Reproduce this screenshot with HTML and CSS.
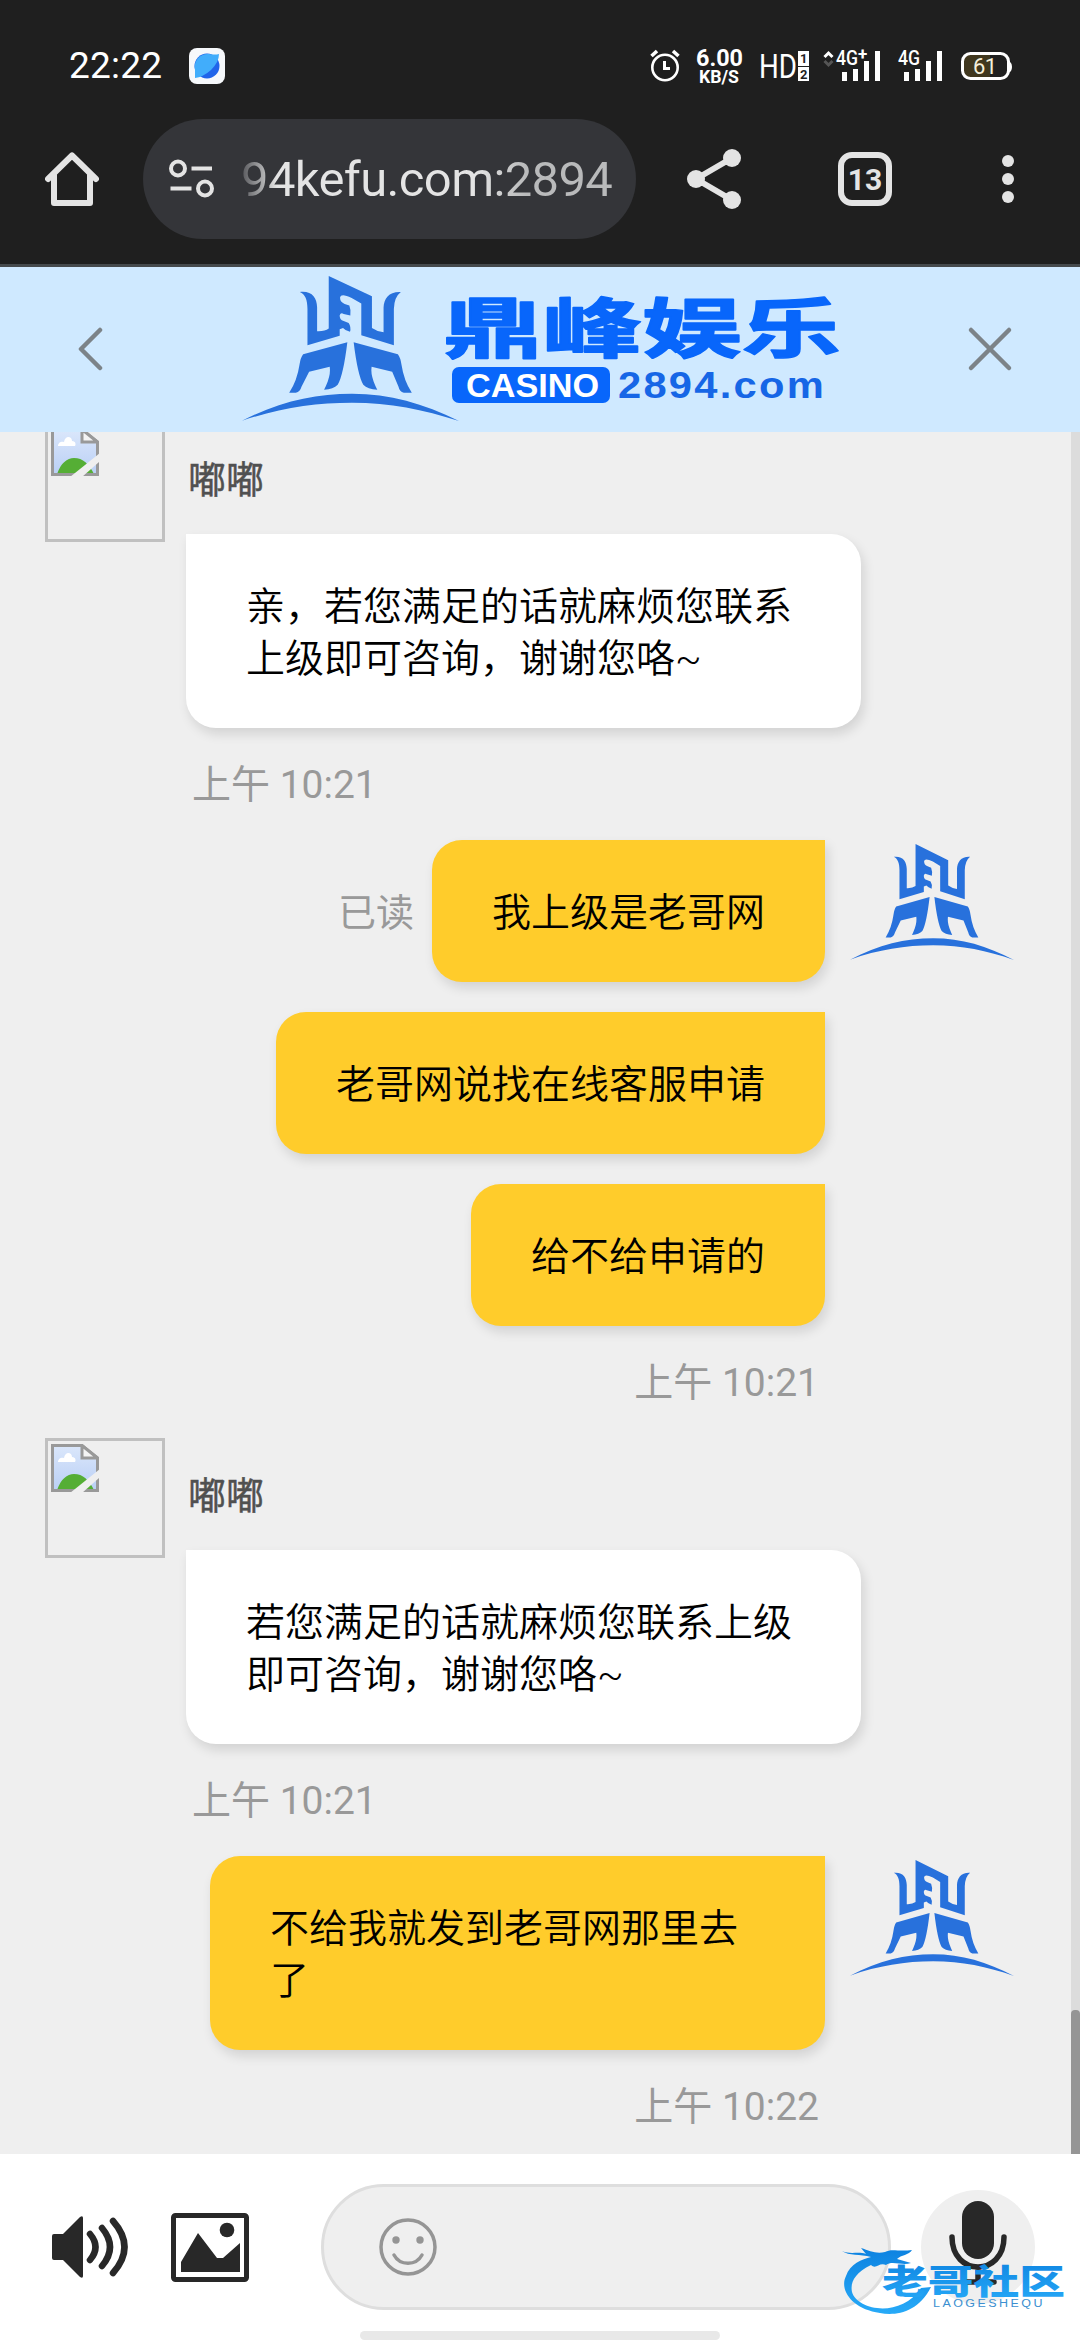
FILE: index.html
```html
<!DOCTYPE html>
<html lang="zh-CN">
<head>
<meta charset="utf-8">
<title>鼎峰娱乐 客服</title>
<link rel="stylesheet" href="styles.css">
</head>
<body>
<svg class="defs" aria-hidden="true">
  <defs>
    <linearGradient id="sky" x1="0" y1="0" x2="0" y2="1"><stop offset="0" stop-color="#dbe7fb"/><stop offset="1" stop-color="#b9cff5"/></linearGradient>
    <linearGradient id="wm" x1="0" y1="0" x2="0" y2="1"><stop offset="0" stop-color="#0d82e0"/><stop offset="1" stop-color="#27aaf8"/></linearGradient>
    <symbol id="emblem" viewBox="65 33 653 436" preserveAspectRatio="none">
      <path d="M326 33L456 94V189Q472 200 491 202V128C492 100 508 79 543 81Q523 96 522 132V241L424 211V116L395 99Q362 84 360 98Q360 112 374 117L388 122Q394 137 391 152L371 147Q362 141 359 151Q358 165 371 168L386 174Q394 186 390 201Q376 197 369 189L359 193V213L262 241V132C262 104 255 88 239 81C276 77 290 98 291 127V199Q314 200 326 191Z"/>
      <path d="M382 232L249 268Q241 278 238 300Q231 348 207 384H227Q240 381 244 366L267 321L329 306Q332 325 323 350Q318 363 312 375Q340 373 353 360Q370 331 382 232Z"/>
      <path d="M401 232L534 268Q542 278 545 300Q552 348 576 384H552Q539 381 536 366L517 321L455 306Q452 325 461 350Q466 363 472 375Q443 373 430 360Q413 331 401 232Z"/>
      <path d="M65 468C180 410 285 387 396 387C510 387 610 416 718 469C610 434 510 414 396 414C285 414 180 430 65 468Z"/>
    </symbol>
    <symbol id="broken" viewBox="0 0 48 48">
      <path d="M1.5 1.5H31L46.500 14V46.500H1.500Z" fill="url(#sky)"/>
      <path d="M6 46C10 35 16 30 23 30C32 30 38 36 43 46Z" fill="#55ae35"/>
      <path d="M7 18C7 14 11 13 13 14C14 7 21 8 21 13C25 13 25 17 24 18Z" fill="#fff"/>
      <path d="M1.500 1.500H31L46.500 14V46.500H1.500Z" fill="none" stroke="#999" stroke-width="3"/>
      <path d="M31 1.500V14H46.500Z" fill="#f4f4f4" stroke="#999" stroke-width="3"/>
      <path d="M49 25V33L31 49H19Z" fill="#efefef"/>
    </symbol>
  </defs>
</svg>
<div class="screen">
  <div class="status">
    <span class="clock">22:22</span>
    <svg class="app" width="36" height="36" viewBox="0 0 36 36"><rect width="36" height="36" rx="8" fill="#f6f8fb"/><circle cx="18" cy="18" r="12.500" fill="#2064ea"/><path d="M30 6Q30 14 22 22Q14 29 6 30Q6 26 6 22C4 12 12 5 20 6Q26 7 30 6Z" fill="#41adfb"/></svg>
    <svg class="indicators" width="370" height="46" viewBox="0 0 370 46">
      <g fill="none" stroke="#fff" stroke-width="2.600">
        <circle cx="15" cy="22.500" r="12.700"/><path d="M14.500 16V23.500H20" stroke-width="3"/><path d="M1.500 11L7 6M28.500 11L23 6" stroke-width="3.600"/>
      </g>
      <g fill="#fff" class="num">
        <text x="46" y="20.500" font-size="24" font-weight="700" textLength="47" lengthAdjust="spacingAndGlyphs">6.00</text>
        <text x="49" y="38" font-size="18" font-weight="700" textLength="40" lengthAdjust="spacingAndGlyphs">KB/S</text>
        <text x="109" y="33" font-size="33" textLength="38" lengthAdjust="spacingAndGlyphs">HD</text>
        <path d="M148 6H159V21H148ZM148 22H159V36H148Z"/>
        <text x="186" y="20" font-size="21" font-weight="500" textLength="22" lengthAdjust="spacingAndGlyphs">4G</text>
        <text x="208" y="15" font-size="17" font-weight="700">+</text>
        <text x="248" y="20" font-size="21" font-weight="500" textLength="22" lengthAdjust="spacingAndGlyphs">4G</text>
        <path d="M192 27h5v9h-5zM203 24h5v12h-5zM214 16h5v20h-5zM225 6h5v30h-5zM254 27h5v9h-5zM265 24h5v12h-5zM276 16h5v20h-5zM287 6h5v30h-5z"/>
        <path d="M358 16q4 1 4 6t-4 6z"/>
      </g>
      <g class="num" fill="#1f1f1f" font-weight="700" font-size="13"><text x="150" y="18">1</text><text x="150" y="34">2</text></g>
      <path d="M174.500 12L178.500 8L182.500 12" fill="none" stroke="#fff" stroke-width="3"/>
      <path d="M174.500 16L178.500 20L182.500 16" fill="none" stroke="#555" stroke-width="3"/>
      <path d="M319 9H340V34H319Q314 34 314 28V15Q314 9 319 9" fill="#40371e"/>
      <rect x="312.500" y="8.500" width="46" height="25" rx="8" fill="none" stroke="#fff" stroke-width="3"/>
      <text class="num" x="323" y="28.500" font-size="22" fill="#f5f0dc" textLength="24">61</text>
    </svg>
  </div>

  <div class="browser">
    <svg class="home" width="54" height="54" viewBox="0 0 54 54" fill="none" stroke="#e4e4e4" stroke-width="6" stroke-linejoin="round" stroke-linecap="round"><path d="M3 27L27 3.500L51 27"/><path d="M9 23V51H45V23"/></svg>
    <div class="url">
      <svg width="46" height="40" viewBox="0 0 46 40" fill="none" stroke="#e4e4e4" stroke-width="4"><circle cx="9" cy="9.500" r="7"/><path d="M22.500 9.500H43M1.500 29.500H22.500"/><circle cx="36" cy="29.500" r="7"/></svg>
      <span class="address">94kefu.com:2894</span>
    </div>
    <svg class="share" width="54" height="60" viewBox="0 0 54 60" fill="#e4e4e4"><path d="M9 30L45 9M9 30L45 51" stroke="#e4e4e4" stroke-width="6"/><circle cx="9" cy="30" r="9"/><circle cx="45" cy="9" r="9"/><circle cx="45" cy="51" r="9"/></svg>
    <span class="tabs">13</span>
    <svg class="more" width="12" height="48" viewBox="0 0 12 48" fill="#e4e4e4"><circle cx="6" cy="6" r="6"/><circle cx="6" cy="24" r="6"/><circle cx="6" cy="42" r="6"/></svg>
  </div>

  <header class="header">
    <svg class="back" width="26" height="44" viewBox="0 0 26 44"><path d="M22 3L3 22L22 41"/></svg>
    <svg class="brand" width="600" height="165" viewBox="0 0 600 165">
      <use href="#emblem" x="2" y="9" width="217" height="145" fill="#2871dc"/>
      <text class="brand-cn" x="203" y="85" textLength="398" lengthAdjust="spacingAndGlyphs">鼎峰娱乐</text>
      <rect x="212" y="100" width="158" height="36" rx="7" fill="#0866fb"/>
      <text class="brand-en" x="226" y="130" font-size="34" fill="#fff" textLength="133" lengthAdjust="spacingAndGlyphs">CASINO</text>
      <text class="brand-en dom" x="378" y="130.500" font-size="37" fill="#1666e6" textLength="208" lengthAdjust="spacingAndGlyphs">2894.com</text>
    </svg>
    <svg class="close" width="46" height="46" viewBox="0 0 46 46"><path d="M4 4L42 42M42 4L4 42"/></svg>
  </header>

  <main class="chat">
    <div class="log">
      <section class="turn agent">
        <div class="frame"><svg width="48" height="48"><use href="#broken"/></svg></div>
        <div class="column">
          <div class="name">嘟嘟</div>
          <div class="bubble">亲，若您满足的话就麻烦您联系<br>上级即可咨询，谢谢您咯~</div>
          <div class="time">上午 10:21</div>
        </div>
      </section>
      <section class="turn user">
        <div class="column">
          <div class="line"><span class="read">已读</span><div class="bubble">我上级是老哥网</div></div>
          <div class="bubble">老哥网说找在线客服申请</div>
          <div class="bubble">给不给申请的</div>
          <div class="time">上午 10:21</div>
        </div>
        <svg class="avatar" width="164" height="116"><use href="#emblem" width="164" height="116"/></svg>
      </section>
      <section class="turn agent">
        <div class="frame"><svg width="48" height="48"><use href="#broken"/></svg></div>
        <div class="column">
          <div class="name">嘟嘟</div>
          <div class="bubble">若您满足的话就麻烦您联系上级<br>即可咨询，谢谢您咯~</div>
          <div class="time">上午 10:21</div>
        </div>
      </section>
      <section class="turn user">
        <div class="column">
          <div class="bubble wide">不给我就发到老哥网那里去<br>了</div>
          <div class="time">上午 10:22</div>
        </div>
        <svg class="avatar" width="164" height="116"><use href="#emblem" width="164" height="116"/></svg>
      </section>
    </div>
    <div class="track"><div class="thumb"></div></div>
  </main>

  <footer class="composer">
    <svg class="sound" width="76" height="64" viewBox="0 0 76 64"><path d="M2 19H11L28 2Q31 0 31 3V61Q31 64 28 62L11 45H2Q0 45 0 43V21Q0 19 2 19Z" fill="#282828"/><path d="M38 19Q49 32 38 45M50 13Q66 32 50 51M61 6Q84 32 61 58" fill="none" stroke="#282828" stroke-width="6.500" stroke-linecap="round"/></svg>
    <svg class="picture" width="78" height="69" viewBox="0 0 78 69"><rect x="2.500" y="2.500" width="73" height="64" rx="2" fill="none" stroke="#282828" stroke-width="5"/><path d="M10 59V49L27 20L46 45H52L69 30V59Z" fill="#282828"/><circle cx="56" cy="17" r="7.300" fill="#282828"/></svg>
    <div class="input"><svg width="58" height="58" viewBox="0 0 58 58" fill="none" stroke="#959595" stroke-width="3.500"><circle cx="29" cy="29" r="27"/><path d="M15 37C21 48 37 48 43 37" stroke-linecap="round"/><g fill="#959595" stroke="none"><circle cx="17" cy="22" r="3.700"/><circle cx="41" cy="22" r="3.700"/></g></svg></div>
    <div class="mic"><svg width="114" height="114" viewBox="0 0 114 114"><rect x="41" y="11" width="32" height="58" rx="16" fill="#282828"/><path d="M31 47C31 87 83 87 83 47M57 78V92M43 92H73" fill="none" stroke="#282828" stroke-width="5.500" stroke-linecap="round"/></svg></div>
    <svg class="watermark" width="228" height="80" viewBox="0 0 228 80">
      <path d="M0 6C9 10 16 6 24 9L19 3C28 6 34 9 43 7C50 3 56 7 70 5C67 10 59 10 55 14L69 18C60 21 50 15 44 20C37 17 34 25 29 20C13 28 8 37 10 47C15 65 58 74 79 43L89 42C76 68 53 71 38 68C10 64-3 45 4 31C8 19 20 14 29 12C18 9 7 11 0 6Z" fill="url(#wm)"/>
      <text class="wm-cn" x="40" y="49" fill="url(#wm)" textLength="183" lengthAdjust="spacingAndGlyphs">老哥社区</text>
      <text class="wm-en" x="91" y="62" textLength="112" lengthAdjust="spacingAndGlyphs">LAOGESHEQU</text>
    </svg>
    <div class="handle"></div>
  </footer>
</div>
</body>
</html>
```

FILE: styles.css
```css
* { box-sizing: border-box; }
body { margin: 0; font-family: Roboto, "Noto Sans CJK SC", sans-serif; }
svg { display: block; flex: none; }
.defs { position: absolute; width: 0; height: 0; }
.screen { width: 1080px; height: 2340px; display: flex; flex-direction: column; overflow: hidden; background: #efefef; }

.status { height: 120px; flex: none; padding: 44px 0 0 69px; display: flex; align-items: flex-start; background: #1f1f1f; color: #fff; }
.clock { width: 93px; margin-right: 27px; font-size: 37px; line-height: 44px; letter-spacing: 0.200px; white-space: nowrap; }
.app { margin-top: 4px; }
.indicators { margin: 1px 0 0 425px; }
.num { font-family: Roboto, sans-serif; }

.browser { height: 147px; flex: none; padding: 0 66px 27px 46px; display: flex; align-items: center; background: #1f1f1f; border-bottom: 3px solid #45494c; }
.browser .home { margin: 0 44px 0 -1px; }
.url { width: 493px; height: 120px; padding-left: 26px; display: flex; align-items: center; gap: 26px; border-radius: 60px; background: #343539; }
.address { padding-top: 2px; font-size: 49px; line-height: 60px; white-space: nowrap; letter-spacing: -0.650px; color: transparent; background: linear-gradient(90deg, #55565a 0, #e4e4e4 36px, #e4e4e4 235px, #b9babb 285px); background-clip: text; -webkit-background-clip: text; }
.share { margin-left: 51px; }
.tabs { width: 54px; height: 54px; margin-left: 97px; border: 6px solid #e4e4e4; border-radius: 14px; color: #e4e4e4; font-size: 30px; font-weight: 700; line-height: 43px; text-align: center; }
.more { margin-left: auto; }

.header { height: 165px; flex: none; padding-bottom: 2px; display: flex; align-items: center; background: #cfe9ff; }
.header .back { margin-left: 78px; }
.header .brand { margin: 2px 0 0 136px; }
.header .close { margin-left: 127px; }
.back path, .close path { fill: none; stroke: #7c8388; stroke-width: 4.500; stroke-linecap: round; stroke-linejoin: round; }
.brand-cn { font: 700 65px "Noto Sans CJK SC", sans-serif; fill: #0866fb; stroke: #0866fb; stroke-width: 1.500px; stroke-linejoin: round; }
.brand-en { font-family: "Liberation Sans", sans-serif; font-weight: 700; }
.dom { letter-spacing: 2px; }

.chat { height: 1722px; flex: none; display: flex; overflow: hidden; }
.log { width: 1071px; margin-top: -10px; }
.track { width: 9px; background: #dcdcdc; display: flex; align-items: flex-end; }
.thumb { width: 9px; height: 144px; border-radius: 4px 4px 0 0; background: #959595; }
.turn { display: flex; align-items: flex-start; padding-bottom: 35px; }
.column { display: flex; flex-direction: column; }
.agent { padding-left: 45px; gap: 21px; }
.user { padding-right: 57px; gap: 25px; justify-content: flex-end; }
.user .column { align-items: flex-end; gap: 30px; }
.frame { width: 120px; height: 120px; padding: 3px; border: 3px solid #c0c0c0; }
.name { height: 112px; padding: 38px 0 0 2px; font-size: 38px; line-height: 40px; font-weight: 400; color: #505050; -webkit-text-stroke: 0.500px #505050; }
.bubble { padding: 47px 60px 43px; font-size: 39px; font-weight: 350; line-height: 52px; color: #000; white-space: nowrap; box-shadow: 3px 6px 12px rgba(0, 0, 0, 0.12); }
.agent .bubble { width: 675px; background: #fff; border-radius: 0 30px 30px 30px; }
.user .bubble { background: #ffcc2b; border-radius: 30px 0 30px 30px; }
.user .wide { width: 615px; }
.line { display: flex; align-items: center; gap: 18px; }
.read { padding-top: 4px; font-size: 38px; line-height: 52px; color: #999; }
.time { margin-top: 37px; padding: 1px 0 0 6px; font-size: 39px; line-height: 39px; color: #999; }
.user .time { margin-top: 7px; padding: 1px 6px 0 0; }
.avatar { margin-top: 4px; fill: #2871dc; }

.composer { position: relative; height: 186px; flex: none; padding-left: 52px; display: flex; align-items: center; background: #fff; }
.picture { margin-left: 43px; }
.input { width: 570px; height: 126px; margin: 0 30px 0 72px; padding-left: 55px; display: flex; align-items: center; border: 3px solid #dedede; border-radius: 63px; background: #efefef; }
.mic { width: 114px; height: 114px; border-radius: 57px; background: #efefef; }
.watermark { position: absolute; left: 842px; top: 91px; }
.wm-cn { font: 900 34px "Noto Sans CJK SC", sans-serif; }
.wm-en { font: 400 10px "Liberation Sans", sans-serif; letter-spacing: 2px; fill: #3c8fd0; }
.handle { position: absolute; left: 360px; bottom: 0; width: 360px; height: 9px; border-radius: 5px; background: #e8e8e8; }
```
